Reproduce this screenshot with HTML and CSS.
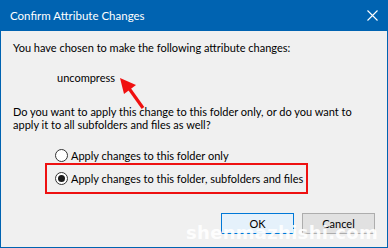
FILE: index.html
```html
<!DOCTYPE html>
<html>
<head>
<meta charset="utf-8">
<link rel="stylesheet" href="styles.css">
</head>
<body>
<div class="window">
  <div class="titlebar">
    <span class="title">Confirm Attribute Changes</span>
    <svg class="close" width="11" height="11" viewBox="0 0 11 11"><path d="M0.5 0.5 L10.5 10.5 M10.5 0.5 L0.5 10.5" stroke="#fff" stroke-width="1.1" fill="none"/></svg>
  </div>
  <div class="content">
    <p class="line intro">You have chosen to make the following attribute changes:</p>
    <p class="line change">uncompress</p>
    <p class="line question">Do you want to apply this change to this folder only, or do you want to<br>apply it to all subfolders and files as well?</p>
    <div class="options">
      <label class="option"><span class="radio"></span>Apply changes to this folder only</label>
      <label class="option highlight"><span class="radio checked"></span>Apply changes to this folder, subfolders and files</label>
    </div>
    <div class="buttons">
      <button class="btn primary">OK</button>
      <button class="btn">Cancel</button>
    </div>
  </div>
  <svg class="arrow" width="30" height="36" viewBox="0 0 30 36"><path d="M10 11 L25 32" stroke="#f01010" stroke-width="3.2" fill="none"/><polygon points="2,2 18,9 6,18" fill="#f01010"/></svg>
  <div class="watermark">shenmazhishi.com</div>
</div>
</body>
</html>
```
FILE: styles.css
```css
* { box-sizing: border-box; }
html, body { margin: 0; padding: 0; }
body { width: 388px; height: 248px; overflow: hidden; font-family: "Lato", "Noto Sans", sans-serif; font-size: 11px; color: #000; }
.window { position: relative; width: 388px; height: 248px; background: #f0f0f0; border: 1px solid #0063b1; border-top: none; display: flex; flex-direction: column; overflow: hidden; }
.titlebar { flex: none; height: 31px; background: #0063b1; display: flex; align-items: center; justify-content: space-between; padding: 0 10px 0 10px; margin: 0 -1px; }
.title { color: #fff; font-size: 11.5px; }
.content { flex: 1; padding: 10px 12px 0 12px; display: flex; flex-direction: column; }
.line { margin: 0; line-height: 14px; white-space: nowrap; }
.change { margin: 16px 0 0 44px; }
.question { margin-top: 20px; line-height: 13px; }
.options { margin: 17px 0 0 42px; display: flex; flex-direction: column; }
.option { display: flex; align-items: center; height: 14px; white-space: nowrap; }
.highlight { border: 2px solid #ee1111; width: 263px; height: 31px; margin: 1px 0 0 -10px; padding-left: 8px; }
.radio { flex: none; width: 13px; height: 13px; border: 1px solid #333; border-radius: 50%; background: #fff; margin-right: 3px; display: flex; align-items: center; justify-content: center; }
.radio.checked::after { content: ""; width: 7px; height: 7px; border-radius: 50%; background: #1a1a1a; }
.buttons { display: flex; justify-content: flex-end; gap: 8px; margin-top: 19px; }
.btn { width: 73px; height: 21px; font-family: inherit; font-size: 11px; padding: 0; background: #e1e1e1; border: 1px solid #adadad; color: #000; }
.btn.primary { background: #e5f1fb; border-color: #0078d7; }
.arrow { position: absolute; left: 117px; top: 76px; }
.watermark { position: absolute; left: 185px; top: 222px; color: rgba(255,255,255,0.92); font-family: "DejaVu Sans", sans-serif; font-weight: bold; font-size: 18px; letter-spacing: 0.3px; white-space: nowrap; }
```
